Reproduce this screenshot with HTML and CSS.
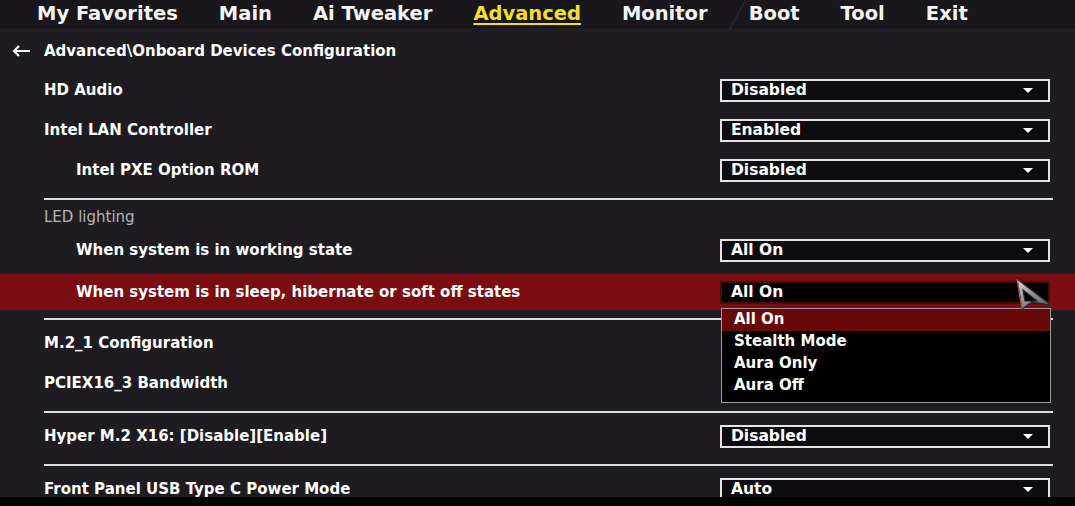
FILE: index.html
```html
<!DOCTYPE html>
<html>
<head>
<meta charset="utf-8">
<link rel="stylesheet" href="styles.css">
</head>
<body>
<div class="screen">
  <nav class="tabs">
    <span class="tab">My Favorites</span>
    <span class="tab">Main</span>
    <span class="tab">Ai Tweaker</span>
    <span class="tab active">Advanced</span>
    <span class="tab">Monitor</span>
    <span class="tab slash">Boot</span>
    <span class="tab">Tool</span>
    <span class="tab">Exit</span>
  </nav>
  <main class="content">
    <div class="crumb">
      <svg class="back" width="19" height="12" viewBox="0 0 19 12"><path d="M18 6H2M7 1L2 6l5 5" fill="none" stroke="#fff" stroke-width="2.2"/></svg>
      <span>Advanced\Onboard Devices Configuration</span>
    </div>

    <div class="row"><span class="label">HD Audio</span><div class="select"><span>Disabled</span><i class="caret"></i></div></div>
    <div class="row"><span class="label">Intel LAN Controller</span><div class="select"><span>Enabled</span><i class="caret"></i></div></div>
    <div class="row indent"><span class="label">Intel PXE Option ROM</span><div class="select"><span>Disabled</span><i class="caret"></i></div></div>

    <hr class="sep">
    <div class="group">LED lighting</div>
    <div class="row indent"><span class="label">When system is in working state</span><div class="select"><span>All On</span><i class="caret"></i></div></div>
    <div class="row indent current"><span class="label">When system is in sleep, hibernate or soft off states</span>
      <div class="select open"><span>All On</span>
        <ul class="menu">
          <li class="hl">All On</li>
          <li>Stealth Mode</li>
          <li>Aura Only</li>
          <li>Aura Off</li>
        </ul>
        <svg class="cursor" width="38" height="34" viewBox="0 0 38 34">
          <defs>
            <linearGradient id="cg" x1="0" y1="0" x2="1" y2="1">
              <stop offset="0" stop-color="#d9d9dc"/>
              <stop offset="0.5" stop-color="#8c8c92"/>
              <stop offset="1" stop-color="#5a5a60"/>
            </linearGradient>
          </defs>
          <path d="M1 1L35 27L16 24L6 31Z M7 12L21 23L9 23Z" fill="url(#cg)" fill-rule="evenodd" stroke="#2a2a2e" stroke-width="1.2"/>
          <path d="M1 1L6 31" stroke="#c44a50" stroke-width="1.2" fill="none"/>
        </svg>
      </div>
    </div>

    <hr class="sep">
    <div class="row"><span class="label">M.2_1 Configuration</span></div>
    <div class="row"><span class="label">PCIEX16_3 Bandwidth</span></div>

    <hr class="sep">
    <div class="row"><span class="label">Hyper M.2 X16: [Disable][Enable]</span><div class="select"><span>Disabled</span><i class="caret"></i></div></div>

    <hr class="sep">
    <div class="row"><span class="label">Front Panel USB Type C Power Mode</span><div class="select"><span>Auto</span><i class="caret"></i></div></div>
  </main>
  <footer class="foot"></footer>
</div>
</body>
</html>
```

FILE: styles.css
```css
* { box-sizing: border-box; }
html, body { margin: 0; padding: 0; }
body {
  background: #000;
  font-family: "DejaVu Sans", "Liberation Sans", sans-serif;
  color: #fff;
}
.screen {
  width: 1075px;
  height: 506px;
  display: flex;
  flex-direction: column;
  overflow: hidden;
  background: #1e1c21;
}
.tabs {
  height: 28px;
  flex: none;
  display: flex;
  align-items: center;
  gap: 41px;
  padding-left: 37px;
  background: #19171b;
  border-bottom: 1px solid #141215;
  font-weight: bold;
  font-size: 19.5px;
  position: relative;
}
.tab {
  line-height: 26px;
  color: #f4f4f4;
  position: relative;
}
.tab.active {
  color: #f2df2c;
  text-decoration: underline;
  text-decoration-thickness: 2px;
  text-underline-offset: 3px;
}
.tab.slash::before {
  content: "";
  position: absolute;
  left: -12px;
  top: -2px;
  width: 1px;
  height: 32px;
  background: #2e2c32;
  transform: skewX(-28deg);
}
.content {
  flex: 1;
  overflow: hidden;
  position: relative;
}
.crumb {
  height: 42px;
  display: flex;
  align-items: center;
  padding: 3px 0 0 12px;
  gap: 13px;
  font-weight: bold;
  font-size: 15px;
}
.back { flex: none; }
.row {
  height: 40px;
  display: flex;
  align-items: center;
  padding: 0 25px 0 44px;
  font-weight: bold;
  font-size: 15px;
}
.row.indent { padding-left: 76px; }
.row.current {
  background: #7a0d10;
  height: 36px;
  margin-top: 4px;
}
.label { flex: 1; white-space: nowrap; }
.select {
  width: 330px;
  height: 23px;
  flex: none;
  border: 2px solid #e4e4e4;
  background: #0e0c10;
  display: flex;
  align-items: center;
  justify-content: space-between;
  padding: 0 15px 0 9px;
  font-size: 15.5px;
  font-weight: bold;
  position: relative;
}
.caret {
  width: 0;
  height: 0;
  border-left: 5.5px solid transparent;
  border-right: 5.5px solid transparent;
  border-top: 5px solid #fff;
}
.select.open {
  background: #000;
  border-color: #4a0a0c;
}
.menu {
  position: absolute;
  left: -1px;
  top: calc(100% + 6px);
  width: 330px;
  margin: 0;
  padding: 0 0 5px 0;
  list-style: none;
  background: #000;
  border: 1px solid #9a9a9e;
  z-index: 2;
}
.menu li {
  height: 22px;
  line-height: 21px;
  padding-left: 12px;
  font-size: 15px;
  font-weight: bold;
}
.menu li.hl { background: #6a0909; }
.cursor {
  position: absolute;
  left: 294px;
  top: -5px;
  z-index: 3;
}
.sep {
  border: 0;
  height: 2px;
  background: #dcdcdc;
  margin: 8px 22px 3px 44px;
}
.group {
  height: 27px;
  display: flex;
  align-items: center;
  padding-left: 44px;
  font-size: 15px;
  color: #b4b4b6;
}
.foot {
  height: 9px;
  flex: none;
  background: #030303;
}
```
